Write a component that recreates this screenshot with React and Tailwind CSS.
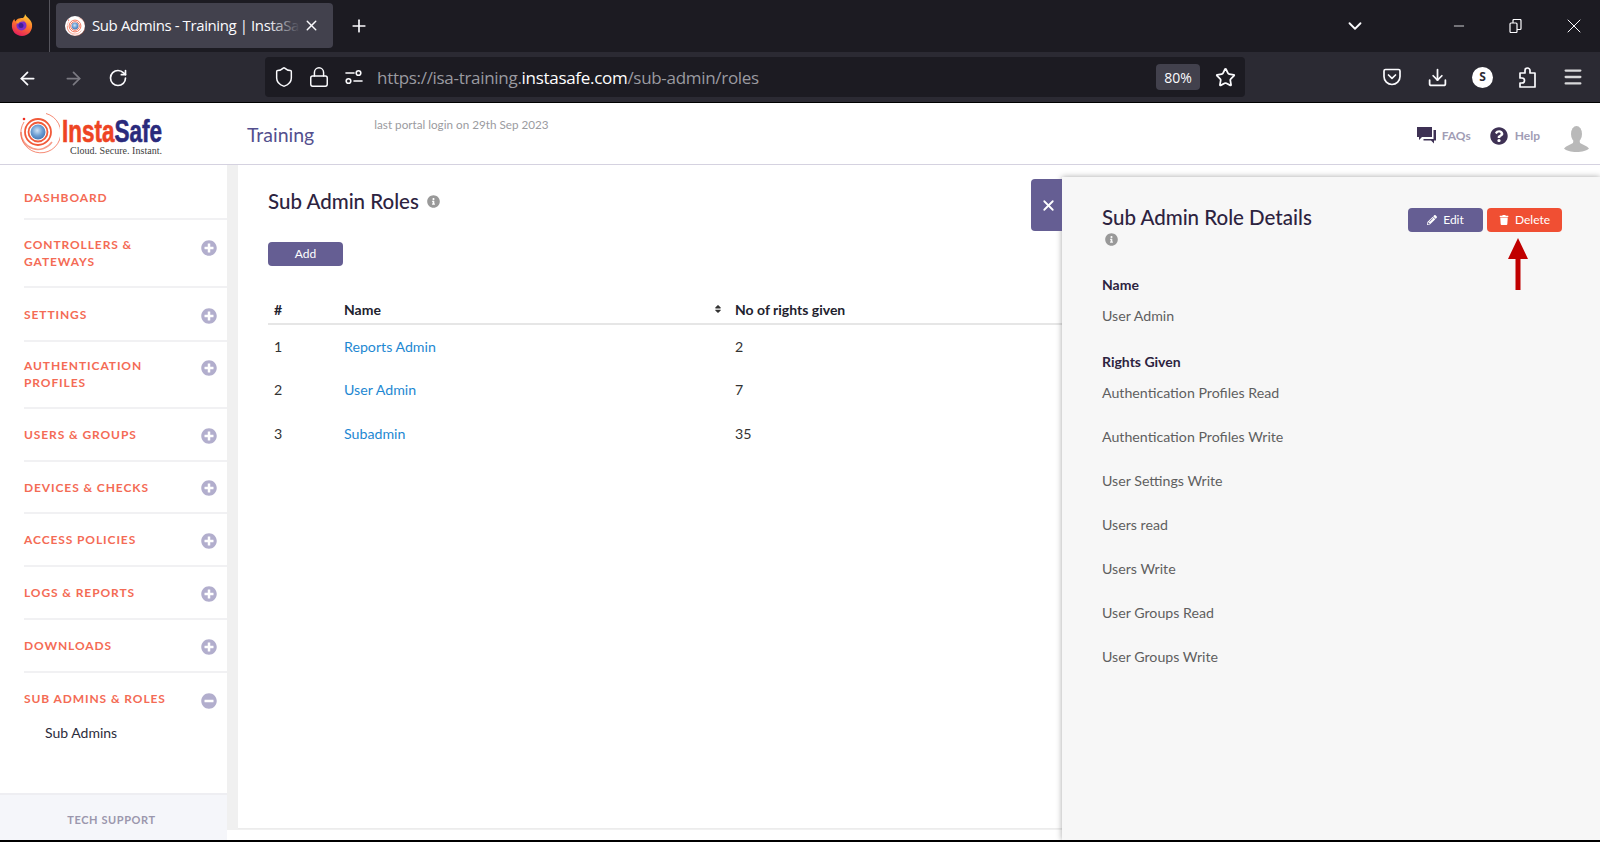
import { ArrowLeft, ArrowRight, RotateCw, Shield, Lock, Star, Download, Menu, ChevronDown, Minus, X, Plus } from "lucide-react";
import { FaPlusCircle, FaMinusCircle, FaInfoCircle, FaQuestionCircle, FaPencilAlt, FaTrash, FaSort } from "react-icons/fa";

const navItems = [
  { label: "DASHBOARD", box: "h-[55px] pt-[12px]", noIcon: true },
  { label: "CONTROLLERS & GATEWAYS", box: "h-[68px]", icon: "mb-[10px]" },
  { label: "SETTINGS", box: "h-[54px]", icon: "mt-[3px]" },
  { label: "AUTHENTICATION PROFILES", box: "h-[67px]", icon: "mb-[14px]", text: "pb-[1px]" },
  { label: "USERS & GROUPS", box: "h-[53px]", icon: "mt-[2px]" },
  { label: "DEVICES & CHECKS", box: "h-[52px]", icon: "mt-[2px]" },
  { label: "ACCESS POLICIES", box: "h-[53px]", icon: "mt-[2px]" },
  { label: "LOGS & REPORTS", box: "h-[53px]", icon: "mt-[2px]" },
  { label: "DOWNLOADS", box: "h-[53px]", icon: "mt-[2px]" },
];

const rows = [
  { id: 1, name: "Reports Admin", rights: 2 },
  { id: 2, name: "User Admin", rights: 7 },
  { id: 3, name: "Subadmin", rights: 35 },
];

const rights = [
  "Authentication Profiles Read",
  "Authentication Profiles Write",
  "User Settings Write",
  "Users read",
  "Users Write",
  "User Groups Read",
  "User Groups Write",
];

function Firefox() {
  return (
    <svg width="22" height="24" viewBox="0 0 22 24">
      <defs>
        <linearGradient id="fx" x1="0.7" y1="0" x2="0.3" y2="1">
          <stop offset="0" stopColor="#ffd43a" />
          <stop offset="0.45" stopColor="#ff7a2a" />
          <stop offset="1" stopColor="#e3195f" />
        </linearGradient>
      </defs>
      <path d="M14 1c1 3 6 5 7 10 1 7-4 12-10 12S0 18 1 11c.3-2 1-4 2.500-5 0 1 .5 2 1 2.500C6 5 10 5 12 5c1-1 2-2 2-4z" fill="url(#fx)" />
      <circle cx="10.500" cy="12.500" r="5" fill="#7b2fc9" />
      <circle cx="10" cy="12.500" r="2.500" fill="#3f1d9b" />
      <path d="M5 9c3-3 7-2 8 0-3-1-5 0-6 2z" fill="#ff9a2e" />
    </svg>
  );
}

function Rings({ size = 44, id = "ball" }) {
  return (
    <svg width={size} height={size} viewBox="0 0 44 44">
      <defs>
        <radialGradient id={id} cx="0.45" cy="0.4" r="0.6">
          <stop offset="0" stopColor="#cfe3f6" />
          <stop offset="0.6" stopColor="#6b9dd2" />
          <stop offset="1" stopColor="#4a7ab5" />
        </radialGradient>
      </defs>
      <g fill="none" stroke="#f15a3a">
        <path d="M8 12A20 20 0 1 0 30 3.500" strokeWidth="1" opacity="0.7" />
        <path d="M5 22a17 17 0 0 0 31 10" strokeWidth="1.500" opacity="0.6" />
        <circle cx="22" cy="22" r="13" strokeWidth="1.800" />
        <circle cx="22" cy="22" r="9.500" strokeWidth="1.800" />
      </g>
      <circle cx="22" cy="22" r="7.500" fill={`url(#${id})`} />
      <circle cx="8" cy="9" r="1.300" fill="#ee2f24" />
    </svg>
  );
}

function Logo() {
  return (
    <div className="flex w-[148px] h-[48px]">
      <Rings />
      <svg width="104" height="48" viewBox="0 0 104 48">
        <text x="2" y="32" fontFamily="Liberation Sans, sans-serif" fontWeight="700" fontSize="32" strokeWidth="0.6" textLength="100" lengthAdjust="spacingAndGlyphs">
          <tspan fill="#ee4423" stroke="#ee4423">Insta</tspan>
          <tspan fill="#2a2a7c" stroke="#2a2a7c">Safe</tspan>
        </text>
        <text x="10" y="43.500" fontFamily="Liberation Serif, serif" fontSize="10" fill="#3d3d3d" textLength="92">Cloud. Secure. Instant.</text>
      </svg>
    </div>
  );
}

function SlidersGlyph() {
  return (
    <svg width="18" height="16" viewBox="0 0 18 16" fill="none" stroke="#fbfbfe" strokeWidth="1.600" strokeLinecap="round">
      <path d="M1 4h8" />
      <circle cx="13.500" cy="4" r="2.300" />
      <circle cx="3.500" cy="12" r="2.300" />
      <path d="M9 12h8" />
    </svg>
  );
}

function PocketGlyph() {
  return (
    <svg width="20" height="20" viewBox="0 0 20 20" fill="none" stroke="#fbfbfe" strokeWidth="1.700" strokeLinecap="round" strokeLinejoin="round">
      <path d="M3.500 2.500h13A1.500 1.500 0 0 1 18 4v5.500a8 8 0 0 1-16 0V4a1.500 1.500 0 0 1 1.500-1.500z" />
      <path d="M6.500 8l3.500 3.300L13.500 8" />
    </svg>
  );
}

function PuzzleGlyph() {
  return (
    <svg width="21" height="23" viewBox="0 0 21 23" fill="none" stroke="#fbfbfe" strokeWidth="1.700" strokeLinejoin="round">
      <path d="M3 7h5V4.500a2.500 2.500 0 0 1 5 0V7h5v14H3v-4h2a2.500 2.500 0 0 0 0-5H3z" />
    </svg>
  );
}

function RestoreGlyph() {
  return (
    <svg width="13" height="14" viewBox="0 0 13 14" fill="none" stroke="#fbfbfe" strokeWidth="1.200">
      <rect x="1" y="4" width="7" height="9.500" rx="1" />
      <path d="M4 4V1.500a1 1 0 0 1 1-1h6a1 1 0 0 1 1 1v8a1 1 0 0 1-1 1H8" />
    </svg>
  );
}

function ChatGlyph() {
  return (
    <svg width="19" height="17" viewBox="0 0 19 17" fill="#3e3154">
      <path d="M0 0h15v10H5l-3 3v-3H0z" />
      <path d="M16.500 3H19v10.500h-2v3l-3-3H6.500V12h10z" />
    </svg>
  );
}

function Avatar() {
  return (
    <svg width="25" height="26" viewBox="0 0 25 26" fill="#b9b9b9">
      <ellipse cx="12.500" cy="8" rx="5.500" ry="8" />
      <path d="M9.500 14h6l.5 3c3 1.500 7 3 9 5.500-2 2-7 3.500-12.500 3.500S2 24.500 0 22.500C2 20 6 18.500 9 17z" />
    </svg>
  );
}

function NavRow({ item }) {
  return (
    <div className="pl-6">
      <div className={`flex items-center justify-between border-b-2 border-[#f1f1f3] pr-[10px] ${item.box}`}>
        <span className={`w-[150px] text-[12px] leading-[17px] font-bold tracking-[0.9px] text-[#f46b55] ${item.text || ""}`}>{item.label}</span>
        {!item.noIcon && <FaPlusCircle className={`text-[#b2aecd] text-[16px] ${item.icon}`} />}
      </div>
    </div>
  );
}

function Sidebar() {
  return (
    <aside className="w-[227px] flex flex-col justify-between bg-white">
      <div>
        {navItems.map((item) => (
          <NavRow key={item.label} item={item} />
        ))}
        <div className="pl-6 pr-[10px] h-[52px] flex items-center justify-between">
          <span className="text-[12px] font-bold tracking-[0.9px] text-[#f46b55]">SUB ADMINS &amp; ROLES</span>
          <FaMinusCircle className="text-[#b2aecd] text-[16px] mt-[3px]" />
        </div>
        <div className="pl-[45px] text-[14px] leading-5 text-[#2c2c3c] mt-[-2px]">Sub Admins</div>
      </div>
      <div className="h-[47px] bg-[#f5f6fa] border-t-2 border-[#eeeef2] flex items-center justify-center pt-[6px] pr-[4px]">
        <span className="text-[11px] font-bold tracking-[0.6px] text-[#9b97ad]">TECH SUPPORT</span>
      </div>
    </aside>
  );
}

function RolesTable() {
  return (
    <table className="w-[794px] mt-[29px] text-[14.200px]">
      <thead>
        <tr className="h-[29px] border-b-2 border-[#e6e6e6] text-left text-[#22222e] font-bold text-[14px]">
          <th className="w-[70px] pl-[6px] font-bold">#</th>
          <th className="w-[391px] pl-[6px] font-bold">
            <div className="flex items-center justify-between pr-[6px]">
              Name
              <FaSort className="text-[10px] text-[#333]" />
            </div>
          </th>
          <th className="pl-[6px] font-bold">No of rights given</th>
        </tr>
      </thead>
      <tbody>
        {rows.map((row) => (
          <tr key={row.id} className="h-[44px] text-[#333]">
            <td className="pl-[6px]">{row.id}</td>
            <td className="pl-[6px] text-[#1e88d2]">{row.name}</td>
            <td className="pl-[6px]">{row.rights}</td>
          </tr>
        ))}
      </tbody>
    </table>
  );
}

function DetailPanel() {
  return (
    <div className="absolute top-3 right-0 bottom-0 w-[538px] bg-[#f7f7f7] shadow-[0_0_6px_rgba(0,0,0,0.35)] pl-10 pr-[38px] pt-[26px]">
      <button className="absolute left-[-31px] top-[2px] w-[31px] h-[52px] bg-[#655e93] rounded-l flex items-center justify-center pl-[3px]">
        <X size={17} strokeWidth={2.500} className="text-white" />
      </button>
      <div className="flex justify-between items-start">
        <div>
          <h2 className="text-[20.500px] leading-7 font-medium text-[#2d2340]">Sub Admin Role Details</h2>
          <FaInfoCircle className="text-[#999] text-[13px] mt-[2px] ml-[3px]" />
        </div>
        <div className="flex gap-1 mt-[5px]">
          <button className="w-[75px] h-6 bg-[#655e93] rounded-sm text-white text-[12px] flex items-center justify-center gap-[6px]">
            <FaPencilAlt className="text-[10px]" />
            Edit
          </button>
          <button className="w-[75px] h-6 bg-[#f04f33] rounded-sm text-white text-[12px] flex items-center justify-center gap-[6px]">
            <FaTrash className="text-[10px]" />
            Delete
          </button>
        </div>
      </div>
      <p className="mt-[29px] text-[14px] leading-5 font-bold text-[#2d2340]">Name</p>
      <p className="mt-[11px] text-[14.200px] leading-5 text-[#5f5f5f]">User Admin</p>
      <p className="mt-[26px] text-[14px] leading-5 font-bold text-[#2d2340]">Rights Given</p>
      <ul className="-mt-[1px]">
        {rights.map((r) => (
          <li key={r} className="h-[44px] flex items-center text-[14.200px] text-[#5f5f5f]">{r}</li>
        ))}
      </ul>
      <svg className="absolute left-[446px] top-[61px]" width="20" height="52" viewBox="0 0 20 52" fill="#c00000">
        <path d="M10 0L20 21H12.500V52H7.500V21H0z" />
      </svg>
    </div>
  );
}

function BrowserChrome() {
  return (
    <div className="font-['Open_Sans',sans-serif]">
      <div className="h-[52px] bg-[#1c1b22] flex items-center text-[#fbfbfe]">
        <div className="w-[50px] h-full flex items-center justify-center border-r border-[#55545c] shrink-0 pr-[5px] pb-[2px]">
          <Firefox />
        </div>
        <div className="ml-[6px] w-[277px] h-[45px] mt-[-1px] bg-[#42414d] rounded flex items-center pl-[9px] shrink-0">
          <div className="w-5 h-5 rounded-full bg-white shrink-0">
            <Rings size={20} id="ball2" />
          </div>
          <div className="relative ml-[7px] w-[208px] overflow-hidden whitespace-nowrap text-[15px] tracking-[-0.4px]">
            Sub Admins - Training | InstaSafe
            <div className="absolute right-0 top-0 bottom-0 w-8 bg-gradient-to-r from-transparent to-[#42414d]" />
          </div>
          <X size={17} className="ml-[3px]" />
        </div>
        <Plus size={20} className="ml-4" />
        <div className="flex-1" />
        <ChevronDown size={22} className="mr-[85px]" />
        <Minus size={16} strokeWidth={1.200} className="mr-[42px]" />
        <RestoreGlyph />
        <X size={24} strokeWidth={1} className="ml-[40px] mr-[14px]" />
      </div>
      <div className="h-[50px] bg-[#2b2a33] flex items-center text-[#fbfbfe]">
        <ArrowLeft size={21} className="ml-[17px] mt-[2px]" />
        <ArrowRight size={21} className="ml-[25px] mt-[2px] text-[#7b7a82]" />
        <RotateCw size={20} className="ml-[24px] mt-[2px]" />
        <div className="ml-[137px] w-[980px] h-10 bg-[#1c1b22] rounded flex items-center pl-2 pr-[9px]">
          <Shield size={22} strokeWidth={1.600} />
          <Lock size={22} strokeWidth={1.600} className="ml-[13px]" />
          <div className="ml-[15px]"><SlidersGlyph /></div>
          <div className="ml-[14px] pt-[2px] text-[17px] text-[#9a9aa0] whitespace-nowrap tracking-[-0.3px]">
            https://isa-training.<span className="text-white">instasafe.com</span>/sub-admin/roles
          </div>
          <div className="flex-1" />
          <div className="w-[44px] h-[26px] bg-[#42414d] rounded text-[14px] flex items-center justify-center">80%</div>
          <Star size={21} className="ml-[15px]" />
        </div>
        <div className="ml-[137px]"><PocketGlyph /></div>
        <Download size={21} className="ml-[25px]" />
        <div className="ml-[24px] w-[21px] h-[21px] rounded-full bg-white text-[#2b2a33] text-[12px] font-bold flex items-center justify-center">S</div>
        <div className="ml-[24px]"><PuzzleGlyph /></div>
        <Menu size={22} strokeWidth={2.500} className="ml-[24px] text-[#d8d8da]" />
      </div>
      <div className="h-px bg-black" />
    </div>
  );
}

function Header() {
  return (
    <header className="h-[62px] bg-white border-b border-[#d5d2e0] flex items-center pl-4 pr-[11px]">
      <Logo />
      <span className="ml-[83px] mt-[2px] text-[19.500px] text-[#544f8e]">Training</span>
      <span className="ml-[60px] self-start mt-[13px] text-[11.700px] text-[#9b9b9f]">last portal login on 29th Sep 2023</span>
      <div className="flex-1" />
      <div className="flex items-center mt-[4px]">
        <ChatGlyph />
        <span className="ml-[6px] text-[12px] font-bold text-[#a19db5]">FAQs</span>
        <FaQuestionCircle className="ml-[19px] text-[#3e3154] text-[18px]" />
        <span className="ml-[7px] text-[12px] font-bold text-[#a19db5]">Help</span>
        <div className="ml-6 mt-[6px]"><Avatar /></div>
      </div>
    </header>
  );
}

export default function App() {
  return (
    <div className="w-[1600px] h-[842px] overflow-hidden flex flex-col bg-white font-['Lato',sans-serif]">
      <BrowserChrome />
      <Header />
      <div className="flex-1 flex relative min-h-0">
        <Sidebar />
        <div className="flex-1 h-[665px] bg-[#f0f0f0] pl-[11px]">
          <div className="h-[664px] bg-white pl-[30px] pt-[22px] border-b border-[#ececec]">
            <div className="flex items-center gap-[8px]">
              <h1 className="text-[20.500px] leading-7 font-medium text-[#2d2340]">Sub Admin Roles</h1>
              <FaInfoCircle className="text-[#999] text-[13px]" />
            </div>
            <button className="mt-[27px] w-[75px] h-6 bg-[#655e93] rounded-sm text-white text-[12px]">Add</button>
            <RolesTable />
          </div>
        </div>
        <DetailPanel />
      </div>
      <div className="h-[2px] bg-black" />
    </div>
  );
}
